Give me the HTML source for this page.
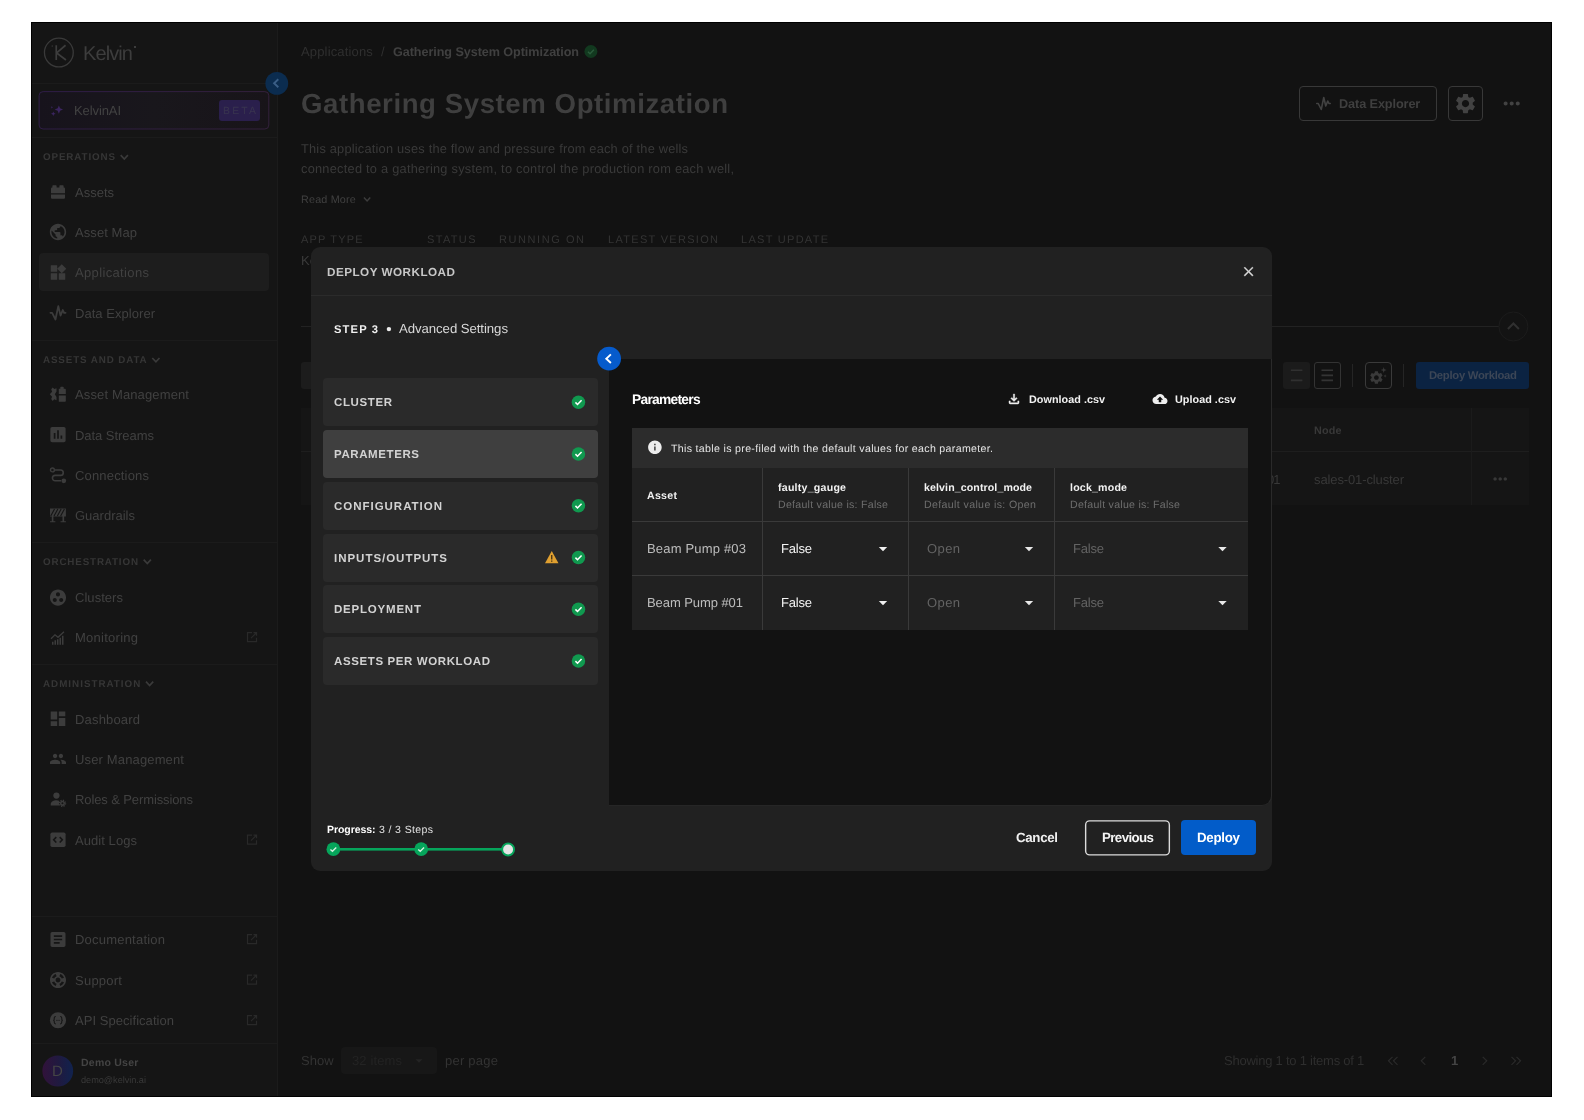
<!DOCTYPE html>
<html><head><meta charset="utf-8"><title>Kelvin - Deploy Workload</title>
<style>
html,body{margin:0;padding:0;background:#fff;}
body{width:1584px;height:1120px;position:relative;overflow:hidden;font-family:"Liberation Sans", sans-serif;}
body>div,body>span,body>svg{position:absolute;display:block;}
span{white-space:pre;will-change:transform;text-rendering:geometricPrecision;}
svg svg{overflow:visible;}
</style></head><body>
<div style="left:31px;top:22px;width:1521px;height:1075px;background:#121212;border:1px solid #000;box-sizing:border-box;"></div>
<div style="left:32px;top:23px;width:245px;height:1073px;background:#151515;"></div>
<div style="left:277px;top:23px;width:1px;height:1073px;background:#1b1b1b;"></div>
<svg style="left:43px;top:37px;" width="33" height="33" viewBox="0 0 33 33"><svg x="0.35" y="0.05" width="31" height="31" viewBox="0 0 31 31"><circle cx="15.5" cy="15.5" r="14.4" fill="none" stroke="#3a3a3a" stroke-width="1.3"/><path d="M12.900 8.200v14.700M22.200 8.200l-8.900 7.600 9.300 7.100" fill="none" stroke="#3d3d3d" stroke-width="1.700"/><rect x="8.300" y="8.400" width="1.200" height="1.200" fill="#3a3a3a"/></svg></svg>
<span style="left:82.60px;top:41.00px;font-size:20px;line-height:26px;color:#3d3d3d;letter-spacing:-0.897px;">Kelvin</span>
<div style="left:134px;top:46px;width:1.5px;height:1.5px;background:#3d3d3d;"></div>
<div style="left:32px;top:83px;width:245px;height:1px;background:#1b1b1b;"></div>
<svg style="left:38px;top:90px;" width="233" height="41" viewBox="0 0 233 41"><defs><linearGradient id="kg" x1="0" x2="1" y1="0" y2="0"><stop offset="0" stop-color="#17131c"/><stop offset=".5" stop-color="#19171c"/><stop offset="1" stop-color="#181419"/></linearGradient><linearGradient id="kb" x1="0" x2="1" y1="0" y2="0"><stop offset="0" stop-color="#2e1c46"/><stop offset="1" stop-color="#33203c"/></linearGradient></defs><rect x="1.100" y="1.600" width="229.700" height="37.400" rx="4" fill="url(#kg)" stroke="url(#kb)" stroke-width="1"/></svg>
<svg style="left:49px;top:104px;" width="16" height="13" viewBox="0 0 16 14"><path d="M10 1.500l1.300 3.200 3.200 1.300-3.200 1.300L10 10.500 8.700 7.300 5.500 6l3.200-1.300z M4 8l.7 1.800 1.800.7-1.800.7L4 13l-.7-1.800-1.800-.7 1.800-.7z M2.500 2l.4 1.100 1.100.4-1.100.4-.4 1.100-.4-1.100L1 3.500l1.100-.4z" fill="#3b2560"/></svg>
<span style="left:74.30px;top:102.00px;font-size:13px;line-height:17px;color:#424242;letter-spacing:-0.100px;">KelvinAI</span>
<div style="left:219px;top:100px;width:41px;height:21px;background:#2a1f4c;border-radius:3px;"></div>
<span style="left:223.00px;top:105.00px;font-size:10.4px;line-height:14px;color:#39344f;letter-spacing:2.208px;">BETA</span>
<div style="left:32px;top:137px;width:246px;height:1px;background:#1b1b1b;"></div>
<span style="left:42.50px;top:151.00px;font-size:9.8px;line-height:13px;color:#363636;font-weight:700;letter-spacing:0.882px;">OPERATIONS</span>
<svg style="left:118px;top:152px;" width="14" height="11" viewBox="0 0 14 11"><svg x="0.0" y="0.5" width="12.600000000000001" height="9.2" viewBox="0 0 12.600000000000001 9.2"><path d="M2.7 2.7L6.300000000000001 6.5L9.9 2.7" fill="none" stroke="#3a3a3a" stroke-width="1.7"/></svg></svg>
<svg style="left:51px;top:185px;" width="14" height="14" viewBox="0 0 14 14"><path d="M2 0.300h3a.6.600 0 0 1 .6.600V2.500h2.800V.9a.6.600 0 0 1 .6-.6h3a.6.600 0 0 1 .6.600V2.500h.4a1 1 0 0 1 1 1V8.300H0V3.500a1 1 0 0 1 1-1h.4V.9a.6.600 0 0 1 .6-.6zM0 9.500h14v3.200a1 1 0 0 1-1 1H1a1 1 0 0 1-1-1z" fill="#3c3c3c"/></svg>
<span style="left:75.00px;top:184.00px;font-size:13px;line-height:17px;color:#414141;letter-spacing:-0.003px;">Assets</span>
<svg style="left:48px;top:222px;" width="21" height="21" viewBox="0 0 21 21"><svg x="0.2" y="0.2" width="19.6" height="19.6" viewBox="0 0 24 24"><path d="M12 2C6.48 2 2 6.48 2 12s4.48 10 10 10 10-4.48 10-10S17.52 2 12 2zm-1 17.93c-3.95-.49-7-3.85-7-7.93 0-.62.08-1.21.21-1.79L9 15v1c0 1.1.9 2 2 2v1.93zm6.9-2.54c-.26-.81-1-1.39-1.9-1.39h-1v-3c0-.55-.45-1-1-1H8v-2h2c.55 0 1-.45 1-1V7h2c1.1 0 2-.9 2-2v-.41c2.93 1.19 5 4.06 5 7.41 0 2.08-.8 3.97-2.1 5.39z" fill="#3c3c3c"/></svg></svg>
<span style="left:75.00px;top:224.00px;font-size:13px;line-height:17px;color:#414141;letter-spacing:0.072px;">Asset Map</span>
<div style="left:39px;top:253px;width:230px;height:38px;background:#1d1d1d;border-radius:4px;"></div>
<svg style="left:48px;top:262px;" width="21" height="22" viewBox="0 0 21 22"><svg x="0.35" y="0.85" width="19.3" height="19.3" viewBox="0 0 24 24"><path d="M13 13v8h8v-8h-8zM3 21h8v-8H3v8zM3 3v8h8V3H3zm13.66-1.31L11 7.34 16.66 13l5.66-5.66-5.66-5.65z" fill="#3c3c3c"/></svg></svg>
<span style="left:75.00px;top:264.00px;font-size:13px;line-height:17px;color:#414141;letter-spacing:0.354px;">Applications</span>
<svg style="left:49px;top:303px;" width="19" height="20" viewBox="0 0 19 20"><svg x="0.04" y="0.84" width="17.92" height="17.92" viewBox="-1.250 -1.500 16 16"><path d="M0 6.500h1.500l3 6 2.500-12 2 8.500 2-5 1.200 2.500H13.500" fill="none" stroke="#3c3c3c" stroke-width="1.600" stroke-linejoin="round" stroke-linecap="round"/></svg></svg>
<span style="left:75.00px;top:305.00px;font-size:13px;line-height:17px;color:#414141;letter-spacing:0.043px;">Data Explorer</span>
<div style="left:32px;top:340px;width:246px;height:1px;background:#1b1b1b;"></div>
<span style="left:42.50px;top:354.00px;font-size:9.8px;line-height:13px;color:#363636;font-weight:700;letter-spacing:0.881px;">ASSETS AND DATA</span>
<svg style="left:149px;top:355px;" width="15" height="11" viewBox="0 0 15 11"><svg x="0.6" y="0.3" width="12.600000000000001" height="9.2" viewBox="0 0 12.600000000000001 9.2"><path d="M2.7 2.7L6.300000000000001 6.5L9.9 2.7" fill="none" stroke="#3a3a3a" stroke-width="1.7"/></svg></svg>
<svg style="left:49px;top:386px;" width="19" height="18" viewBox="0 0 19 18"><svg x="0.5" y="0.2" width="17" height="16" viewBox="0 0 17 16"><path d="M9.300 2.500h1.500V1.200a.7.700 0 0 1 .7-.7h2a.7.700 0 0 1 .7.700V2.500h1.300a.8.800 0 0 1 .8.800V7.800H9.300zM9.300 9.300h7v5.400a.8.800 0 0 1-.8.800H9.300zM3.200 1.200l1.600 1.700L7 2v3.300l-1.700 2.700L7 10.700V14l-2.200-.9-1.600 1.700-1.500-1.900.9-2.400L.3 8l2.300-2.500-.9-2.400z" fill="#3c3c3c"/></svg></svg>
<span style="left:75.00px;top:386.00px;font-size:13px;line-height:17px;color:#414141;letter-spacing:0.132px;">Asset Management</span>
<svg style="left:47px;top:424px;" width="23" height="22" viewBox="0 0 23 22"><svg x="0.85" y="0.45" width="20.3" height="20.3" viewBox="0 0 24 24"><path d="M19 3H5c-1.1 0-2 .9-2 2v14c0 1.1.9 2 2 2h14c1.1 0 2-.9 2-2V5c0-1.1-.9-2-2-2zM9 17H7v-7h2v7zm4 0h-2V7h2v10zm4 0h-2v-4h2v4z" fill="#3c3c3c"/></svg></svg>
<span style="left:75.00px;top:427.00px;font-size:13px;line-height:17px;color:#414141;letter-spacing:-0.044px;">Data Streams</span>
<svg style="left:49px;top:466px;" width="19" height="19" viewBox="0 0 19 19"><svg x="0.2" y="0.7" width="17.3" height="17.3" viewBox="0 0 16 16"><circle cx="3" cy="3" r="1.800" fill="none" stroke="#3c3c3c" stroke-width="1.300"/><circle cx="13.500" cy="13" r="2.200" fill="#3c3c3c"/><path d="M5 3h5.500a2.500 2.500 0 0 1 0 5h-5a2.500 2.500 0 0 0 0 5H11" fill="none" stroke="#3c3c3c" stroke-width="1.500"/></svg></svg>
<span style="left:75.00px;top:467.00px;font-size:13px;line-height:17px;color:#414141;letter-spacing:0.172px;">Connections</span>
<svg style="left:49px;top:507px;" width="19" height="17" viewBox="0 0 19 17"><svg x="0.7" y="0.9" width="16.5" height="14.5" viewBox="0 0 16 14"><path d="M0.300 0.500h15.400v7.800H0.300z M2 8.300h1.600v4.500H5.500v1.200H0.300v-1.200H2z M12.400 8.300H14v4.500h1.700v1.200H10.500v-1.200h1.900z" fill="#3c3c3c"/><path d="M1 7.800l3.700-6.800M4.200 7.800l3.700-6.800M7.400 7.800l3.700-6.800M10.600 7.800l3.700-6.800" stroke="#151515" stroke-width="1.100"/></svg></svg>
<span style="left:75.00px;top:507.00px;font-size:13px;line-height:17px;color:#414141;letter-spacing:0.003px;">Guardrails</span>
<div style="left:32px;top:542px;width:246px;height:1px;background:#1b1b1b;"></div>
<span style="left:42.50px;top:556.00px;font-size:9.8px;line-height:13px;color:#363636;font-weight:700;letter-spacing:0.855px;">ORCHESTRATION</span>
<svg style="left:141px;top:557px;" width="12.600000000000001" height="9.2" viewBox="0 0 12.600000000000001 9.2"><path d="M2.7 2.7L6.300000000000001 6.5L9.9 2.7" fill="none" stroke="#3a3a3a" stroke-width="1.7"/></svg>
<svg style="left:48px;top:587px;" width="21" height="22" viewBox="0 0 21 22"><svg x="0.35" y="0.95" width="19.3" height="19.3" viewBox="0 0 24 24"><path d="M12 2C6.48 2 2 6.48 2 12s4.480 10 10 10 10-4.480 10-10S17.520 2 12 2zM8 17.500c-1.380 0-2.500-1.120-2.500-2.500s1.120-2.500 2.500-2.500 2.500 1.120 2.500 2.500-1.120 2.500-2.500 2.500zM9.500 8c0-1.380 1.120-2.500 2.500-2.500s2.500 1.120 2.500 2.500-1.120 2.500-2.500 2.500S9.500 9.380 9.500 8zm6.500 9.500c-1.380 0-2.500-1.120-2.500-2.500s1.120-2.500 2.500-2.500 2.500 1.120 2.500 2.500-1.120 2.500-2.500 2.500z" fill="#3c3c3c"/></svg></svg>
<span style="left:75.00px;top:589.00px;font-size:13px;line-height:17px;color:#414141;letter-spacing:0.045px;">Clusters</span>
<svg style="left:50px;top:629px;" width="17" height="18" viewBox="0 0 17 18"><svg x="0" y="0.8" width="16" height="16" viewBox="0 0 16 16"><path d="M1 9l4-4 3 2.500 6-5.500" fill="none" stroke="#3c3c3c" stroke-width="1.300"/><path d="M2 12h1.500v3H2zM4.500 10.500H6V15H4.500zM7 9.500h1.500V15H7zM9.500 8H11v7H9.500zM12 6h1.500v9H12z" fill="#3c3c3c"/></svg></svg>
<span style="left:75.00px;top:629.00px;font-size:13px;line-height:17px;color:#414141;letter-spacing:0.255px;">Monitoring</span>
<svg style="left:246px;top:631px;" width="13" height="14" viewBox="0 0 13 14"><svg x="0" y="0.2" width="12" height="12" viewBox="0 0 12 12"><path d="M6 1.500H1.500V10.500H10.500V6.500M5 7L10.500 1.500M7.500 1.500H10.500V4.500" fill="none" stroke="#292929" stroke-width="1.200"/></svg></svg>
<div style="left:32px;top:664px;width:246px;height:1px;background:#1b1b1b;"></div>
<span style="left:42.50px;top:678.00px;font-size:9.8px;line-height:13px;color:#363636;font-weight:700;letter-spacing:1.009px;">ADMINISTRATION</span>
<svg style="left:143px;top:679px;" width="14" height="11" viewBox="0 0 14 11"><svg x="0.3" y="0.0" width="12.600000000000001" height="9.2" viewBox="0 0 12.600000000000001 9.2"><path d="M2.7 2.7L6.300000000000001 6.5L9.9 2.7" fill="none" stroke="#3a3a3a" stroke-width="1.7"/></svg></svg>
<svg style="left:48px;top:708px;" width="21" height="22" viewBox="0 0 21 22"><svg x="0.25" y="0.95" width="19.5" height="19.5" viewBox="0 0 24 24"><path d="M3 13h8V3H3v10zm0 8h8v-6H3v6zm10 0h8V11h-8v10zm0-18v6h8V3h-8z" fill="#3c3c3c"/></svg></svg>
<span style="left:75.00px;top:711.00px;font-size:13px;line-height:17px;color:#414141;letter-spacing:0.174px;">Dashboard</span>
<svg style="left:49px;top:750px;" width="19" height="19" viewBox="0 0 19 19"><svg x="0.25" y="0.15" width="17.5" height="17.5" viewBox="0 0 24 24"><path d="M16 11c1.66 0 2.99-1.34 2.99-3S17.66 5 16 5c-1.66 0-3 1.34-3 3s1.34 3 3 3zm-8 0c1.66 0 2.99-1.34 2.99-3S9.66 5 8 5C6.34 5 5 6.34 5 8s1.34 3 3 3zm0 2c-2.33 0-7 1.17-7 3.5V19h14v-2.5c0-2.33-4.67-3.5-7-3.5zm8 0c-.29 0-.62.02-.97.05 1.16.84 1.97 1.97 1.97 3.45V19h6v-2.5c0-2.33-4.67-3.5-7-3.5z" fill="#3c3c3c"/></svg></svg>
<span style="left:75.00px;top:751.00px;font-size:13px;line-height:17px;color:#414141;letter-spacing:0.146px;">User Management</span>
<svg style="left:49px;top:790px;" width="19" height="19" viewBox="0 0 19 19"><svg x="0.7" y="0.9" width="16.6" height="16.6" viewBox="0 0 16 16"><circle cx="6.500" cy="4.500" r="3" fill="#3c3c3c"/><path d="M1 14v-1.500c0-2 3-3.500 5.500-3.500.8 0 1.700.2 2.500.4V14z" fill="#3c3c3c"/><circle cx="12.300" cy="12" r="1.700" fill="none" stroke="#3c3c3c" stroke-width="1.500"/><circle cx="12.300" cy="12" r="3" fill="none" stroke="#3c3c3c" stroke-width="1.300" stroke-dasharray="1.200 1.160"/></svg></svg>
<span style="left:75.00px;top:791.00px;font-size:13px;line-height:17px;color:#414141;letter-spacing:-0.108px;">Roles &amp; Permissions</span>
<svg style="left:50px;top:832px;" width="17" height="17" viewBox="0 0 17 17"><svg x="0" y="0.3" width="16" height="15" viewBox="0 0 16 15"><rect x=".4" y=".3" width="15.200" height="14.400" rx="1.700" fill="#3c3c3c"/><path d="M6.300 4.800L3.700 7.500l2.600 2.700M9.700 4.800l2.600 2.700-2.600 2.700" fill="none" stroke="#151515" stroke-width="1.600"/></svg></svg>
<span style="left:75.00px;top:832.00px;font-size:13px;line-height:17px;color:#414141;letter-spacing:0.062px;">Audit Logs</span>
<svg style="left:246px;top:833px;" width="13" height="14" viewBox="0 0 13 14"><svg x="0" y="0.7" width="12" height="12" viewBox="0 0 12 12"><path d="M6 1.500H1.500V10.500H10.500V6.500M5 7L10.500 1.500M7.500 1.500H10.500V4.500" fill="none" stroke="#292929" stroke-width="1.200"/></svg></svg>
<div style="left:32px;top:916px;width:245px;height:1px;background:#1b1b1b;"></div>
<svg style="left:48px;top:929px;" width="21" height="22" viewBox="0 0 21 22"><svg x="0.0" y="0.5" width="20" height="20" viewBox="0 0 24 24"><path d="M19 3H5c-1.1 0-2 .9-2 2v14c0 1.1.9 2 2 2h14c1.1 0 2-.9 2-2V5c0-1.1-.9-2-2-2zm-5 14H7v-2h7v2zm3-4H7v-2h10v2zm0-4H7V7h10v2z" fill="#3c3c3c"/></svg></svg>
<span style="left:75.00px;top:931.00px;font-size:13px;line-height:17px;color:#414141;letter-spacing:0.212px;">Documentation</span>
<svg style="left:246px;top:933px;" width="13" height="14" viewBox="0 0 13 14"><svg x="0" y="0.2" width="12" height="12" viewBox="0 0 12 12"><path d="M6 1.500H1.500V10.500H10.500V6.500M5 7L10.500 1.500M7.500 1.500H10.500V4.500" fill="none" stroke="#292929" stroke-width="1.200"/></svg></svg>
<svg style="left:48px;top:970px;" width="21" height="21" viewBox="0 0 21 21"><svg x="0.35" y="0.35" width="19.3" height="19.3" viewBox="0 0 24 24"><path d="M12,2C6.48,2,2,6.48,2,12c0,5.52,4.48,10,10,10s10-4.48,10-10C22,6.48,17.52,2,12,2z M19.46,9.12l-2.78,1.15 c-0.51-1.36-1.58-2.44-2.95-2.94l1.15-2.78C16.98,5.35,18.65,7.02,19.46,9.12z M12,15c-1.66,0-3-1.34-3-3s1.34-3,3-3s3,1.34,3,3 S13.66,15,12,15z M9.13,4.54l1.17,2.78c-1.38,0.5-2.47,1.59-2.98,2.97L4.54,9.13C5.35,7.02,7.02,5.35,9.13,4.54z M4.54,14.87 l2.78-1.15c0.51,1.38,1.59,2.46,2.97,2.96l-1.170,2.78C7.02,18.65,5.35,16.98,4.54,14.87z M14.88,19.46l-1.15-2.78 c1.37-0.51,2.45-1.59,2.95-2.97l2.78,1.170C18.65,16.98,16.98,18.65,14.880,19.460z" fill="#3c3c3c"/></svg></svg>
<span style="left:75.00px;top:972.00px;font-size:13px;line-height:17px;color:#414141;letter-spacing:0.242px;">Support</span>
<svg style="left:246px;top:973px;" width="13" height="14" viewBox="0 0 13 14"><svg x="0" y="0.7" width="12" height="12" viewBox="0 0 12 12"><path d="M6 1.500H1.500V10.500H10.500V6.500M5 7L10.500 1.500M7.500 1.500H10.500V4.500" fill="none" stroke="#292929" stroke-width="1.200"/></svg></svg>
<svg style="left:49px;top:1011px;" width="19" height="19" viewBox="0 0 19 19"><svg x="0.4" y="0.6" width="17.2" height="17.2" viewBox="0 0 16 16"><circle cx="8" cy="8" r="7.500" fill="#3c3c3c"/><path d="M6 4.500c-1 0-1.500.5-1.500 1.500v1c0 .5-.5 1-1 1 .5 0 1 .5 1 1v1c0 1 .5 1.500 1.500 1.500M10 4.500c1 0 1.500.5 1.500 1.500v1c0 .5.500 1 1 1-.5 0-1 .5-1 1v1c0 1-.5 1.500-1.500 1.500" fill="none" stroke="#151515" stroke-width="1"/><circle cx="6.800" cy="8" r=".5" fill="#151515"/><circle cx="8" cy="8" r=".5" fill="#151515"/><circle cx="9.200" cy="8" r=".5" fill="#151515"/></svg></svg>
<span style="left:75.00px;top:1012.00px;font-size:13px;line-height:17px;color:#414141;letter-spacing:0.045px;">API Specification</span>
<svg style="left:246px;top:1014px;" width="13" height="14" viewBox="0 0 13 14"><svg x="0" y="0.2" width="12" height="12" viewBox="0 0 12 12"><path d="M6 1.500H1.500V10.500H10.500V6.500M5 7L10.500 1.500M7.500 1.500H10.500V4.500" fill="none" stroke="#292929" stroke-width="1.200"/></svg></svg>
<div style="left:32px;top:1043px;width:246px;height:1px;background:#1b1b1b;"></div>
<svg style="left:42px;top:1055px;" width="32" height="32" viewBox="0 0 32 32"><defs><linearGradient id="av" x1="0" x2="1" y1="0" y2="0"><stop offset="0" stop-color="#31123a"/><stop offset=".55" stop-color="#1f1a40"/><stop offset="1" stop-color="#10224e"/></linearGradient></defs><circle cx="15.750" cy="16" r="15.400" fill="url(#av)"/></svg>
<span style="left:52.48px;top:1062.00px;font-size:15px;line-height:20px;color:#454545;">D</span>
<span style="left:81.30px;top:1056.00px;font-size:10.5px;line-height:14px;color:#444;font-weight:700;letter-spacing:0.231px;">Demo User</span>
<span style="left:81.30px;top:1074.00px;font-size:9.2px;line-height:12px;color:#3a3a3a;letter-spacing:-0.040px;">demo@kelvin.ai</span>
<svg style="left:264px;top:71px;" width="27" height="26" viewBox="0 0 27 26"><svg x="0.4" y="0.0" width="24.8" height="24.8" viewBox="0 0 24.8 24.8"><circle cx="12.4" cy="12.4" r="11.4" fill="#0b2c4f"/></svg></svg>
<svg style="left:271px;top:76px;" width="12" height="16" viewBox="0 0 12 16"><svg x="0.2" y="0.4" width="10.0" height="13.8" viewBox="0 0 10.0 13.8"><path d="M7.1 2.9L2.9 6.9L7.1 10.9" fill="none" stroke="#3a5e86" stroke-width="1.9"/></svg></svg>
<span style="left:301.00px;top:43.00px;font-size:13px;line-height:17px;color:#2f2f2f;letter-spacing:0.154px;">Applications</span>
<span style="left:380.80px;top:43.00px;font-size:13px;line-height:17px;color:#2f2f2f;">/</span>
<span style="left:393.00px;top:44.00px;font-size:12.6px;line-height:16px;color:#404040;font-weight:700;letter-spacing:-0.055px;">Gathering System Optimization</span>
<svg style="left:584px;top:45px;" width="15" height="14" viewBox="0 0 15 14"><svg x="0.4" y="0" width="13" height="13" viewBox="0 0 12 12"><circle cx="6" cy="6" r="6" fill="#12391f"/><path d="M3.300 6.200l1.900 1.900 3.500-3.700" fill="none" stroke="#2b5c3c" stroke-width="1.300"/></svg></svg>
<span style="left:301.00px;top:86.00px;font-size:27.6px;line-height:36px;color:#3f3f3f;font-weight:700;letter-spacing:0.575px;">Gathering System Optimization</span>
<span style="left:301.00px;top:140.00px;font-size:12.8px;line-height:17px;color:#3a3a3a;letter-spacing:0.209px;">This application uses the flow and pressure from each of the wells</span>
<span style="left:301.00px;top:160.00px;font-size:12.8px;line-height:17px;color:#3a3a3a;letter-spacing:0.244px;">connected to a gathering system, to control the production rom each well,</span>
<span style="left:301.00px;top:193.00px;font-size:10.8px;line-height:14px;color:#404040;letter-spacing:0.172px;">Read More</span>
<svg style="left:361px;top:195px;" width="13" height="10" viewBox="0 0 13 10"><svg x="0.45" y="0.1" width="11.3" height="8.4" viewBox="0 0 11.3 8.4"><path d="M2.5 2.5L5.65 5.9L8.8 2.5" fill="none" stroke="#3c3c3c" stroke-width="1.5"/></svg></svg>
<span style="left:301.00px;top:233.00px;font-size:11px;line-height:14px;color:#343434;letter-spacing:1.171px;">APP TYPE</span>
<span style="left:427.00px;top:233.00px;font-size:11px;line-height:14px;color:#343434;letter-spacing:1.347px;">STATUS</span>
<span style="left:499.00px;top:233.00px;font-size:11px;line-height:14px;color:#343434;letter-spacing:1.568px;">RUNNING ON</span>
<span style="left:608.00px;top:233.00px;font-size:11px;line-height:14px;color:#343434;letter-spacing:1.298px;">LATEST VERSION</span>
<span style="left:741.00px;top:233.00px;font-size:11px;line-height:14px;color:#343434;letter-spacing:1.283px;">LAST UPDATE</span>
<span style="left:301.00px;top:252.00px;font-size:13px;line-height:17px;color:#3a3a3a;">Ke</span>
<div style="left:1299px;top:86px;width:138px;height:35px;border:1px solid #383838;border-radius:4px;box-sizing:border-box;"></div>
<svg style="left:1315px;top:95px;" width="18" height="18" viewBox="0 0 18 18"><svg x="0.5" y="0.5" width="16" height="16" viewBox="-1.250 -1.500 16 16"><path d="M0 6.500h1.500l3 6 2.500-12 2 8.500 2-5 1.200 2.500H13.500" fill="none" stroke="#424242" stroke-width="1.600" stroke-linejoin="round" stroke-linecap="round"/></svg></svg>
<span style="left:1339.20px;top:96.00px;font-size:12.7px;line-height:17px;color:#3f3f3f;font-weight:700;letter-spacing:-0.100px;">Data Explorer</span>
<div style="left:1448px;top:86px;width:35px;height:35px;border:1px solid #383838;border-radius:4px;box-sizing:border-box;"></div>
<svg style="left:1453px;top:91px;" width="26" height="26" viewBox="0 0 26 26"><svg x="0.4" y="0.5" width="24.2" height="24.2" viewBox="0 0 24 24"><path d="M19.14,12.94c0.04-0.3,0.06-0.61,0.06-0.94c0-0.32-0.02-0.64-0.07-0.94l2.03-1.58c0.18-0.14,0.23-0.41,0.12-0.61 l-1.92-3.32c-0.12-0.22-0.37-0.29-0.59-0.22l-2.39,0.96c-0.5-0.38-1.03-0.7-1.62-0.94L14.4,2.81c-0.04-0.24-0.24-0.41-0.48-0.41 h-3.84c-0.24,0-0.43,0.17-0.47,0.41L9.25,5.35C8.66,5.59,8.12,5.92,7.63,6.29L5.24,5.33c-0.22-0.08-0.47,0-0.59,0.22L2.74,8.87 C2.62,9.08,2.66,9.34,2.86,9.48l2.03,1.58C4.84,11.36,4.8,11.69,4.8,12s0.02,0.64,0.07,0.94l-2.03,1.58 c-0.18,0.14-0.23,0.41-0.12,0.61l1.92,3.32c0.12,0.22,0.37,0.29,0.59,0.22l2.39-0.96c0.5,0.38,1.03,0.7,1.62,0.94l0.36,2.54 c0.05,0.24,0.24,0.41,0.48,0.41h3.84c0.24,0,0.44-0.17,0.47-0.41l0.36-2.54c0.59-0.24,1.13-0.56,1.62-0.94l2.39,0.96 c0.22,0.08,0.47,0,0.59-0.22l1.92-3.32c0.12-0.22,0.07-0.47-0.12-0.61L19.14,12.94z M12,15.6c-1.98,0-3.6-1.62-3.6-3.6 s1.62-3.6,3.6-3.6s3.6,1.62,3.6,3.6S13.98,15.6,12,15.6z" fill="#424242"/></svg></svg>
<svg style="left:1499px;top:91px;" width="26" height="26" viewBox="0 0 26 26"><svg x="0.55" y="0.35" width="24.3" height="24.3" viewBox="0 0 24 24"><path d="M6 10c-1.1 0-2 .9-2 2s.9 2 2 2 2-.9 2-2-.9-2-2-2zm12 0c-1.1 0-2 .9-2 2s.9 2 2 2 2-.9 2-2-.9-2-2-2zm-6 0c-1.1 0-2 .9-2 2s.9 2 2 2 2-.9 2-2-.9-2-2-2z" fill="#424242"/></svg></svg>
<div style="left:301px;top:326px;width:1200px;height:1px;background:#222;"></div>
<svg style="left:1497px;top:310px;" width="34" height="34" viewBox="0 0 34 34"><svg x="0.4" y="0.5" width="32" height="32" viewBox="0 0 32 32"><circle cx="16" cy="16" r="14.5" fill="#131313" stroke="#1c1c1c" stroke-width="1"/></svg></svg>
<svg style="left:1504px;top:320px;" width="19" height="13" viewBox="0 0 19 13"><svg x="0.9" y="0.45" width="17" height="11.5" viewBox="0 0 17 11.5"><path d="M3 8.5L8.5 3L14 8.5" fill="none" stroke="#303030" stroke-width="2"/></svg></svg>
<div style="left:301px;top:361.5px;width:20px;height:27px;background:#1c1c1c;border-radius:3px;"></div>
<div style="left:1283px;top:361.5px;width:27px;height:27px;background:#1b1b1b;border-radius:3px;"></div>
<svg style="left:1290px;top:366px;" width="14" height="18" viewBox="0 0 14 18"><path d="M0.900 4.200h11.500M0.900 14.400h11.500" stroke="#303030" stroke-width="1.600"/></svg>
<div style="left:1314px;top:361.5px;width:27px;height:27px;border:1px solid #333;border-radius:3px;box-sizing:border-box;"></div>
<svg style="left:1321px;top:366px;" width="14" height="18" viewBox="0 0 14 18"><path d="M0.500 4.200h11.500M0.500 9.400h11.500M0.500 14.400h11.500" stroke="#343434" stroke-width="1.600"/></svg>
<div style="left:1352px;top:364px;width:1px;height:23px;background:#252525;"></div>
<div style="left:1365px;top:361.5px;width:27px;height:27px;border:1px solid #3a3a3a;border-radius:4px;box-sizing:border-box;"></div>
<svg style="left:1368px;top:369px;" width="18" height="18" viewBox="0 0 18 18"><svg x="0.5" y="0.6" width="15.8" height="15.8" viewBox="0 0 24 24"><path d="M19.14,12.94c0.04-0.3,0.06-0.61,0.06-0.94c0-0.32-0.02-0.64-0.07-0.94l2.03-1.58c0.18-0.14,0.23-0.41,0.12-0.61 l-1.92-3.32c-0.12-0.22-0.37-0.29-0.59-0.22l-2.39,0.96c-0.5-0.38-1.03-0.7-1.62-0.94L14.4,2.81c-0.04-0.24-0.24-0.41-0.48-0.41 h-3.84c-0.24,0-0.43,0.17-0.47,0.41L9.25,5.35C8.66,5.59,8.12,5.92,7.63,6.29L5.24,5.33c-0.22-0.08-0.47,0-0.59,0.22L2.74,8.87 C2.62,9.08,2.66,9.34,2.86,9.48l2.03,1.58C4.84,11.36,4.8,11.69,4.8,12s0.02,0.64,0.07,0.94l-2.03,1.58 c-0.18,0.14-0.23,0.41-0.12,0.61l1.92,3.32c0.12,0.22,0.37,0.29,0.59,0.22l2.39-0.96c0.5,0.38,1.03,0.7,1.62,0.94l0.36,2.54 c0.05,0.24,0.24,0.41,0.48,0.41h3.84c0.24,0,0.44-0.17,0.47-0.41l0.36-2.54c0.59-0.24,1.13-0.56,1.62-0.94l2.39,0.96 c0.22,0.08,0.47,0,0.59-0.22l1.92-3.32c0.12-0.22,0.07-0.47-0.12-0.61L19.14,12.94z M12,15.6c-1.98,0-3.6-1.62-3.6-3.6 s1.62-3.6,3.6-3.6s3.6,1.62,3.6,3.6S13.98,15.6,12,15.6z" fill="#3a3a3a"/></svg></svg>
<svg style="left:1380px;top:367px;" width="8" height="7" viewBox="0 0 8 7"><svg x="0.7" y="0" width="6" height="6" viewBox="0 0 7 7"><path d="M3.500 0l.8 2.700 2.700.8-2.700.8-.8 2.700-.8-2.700L0 3.500l2.700-.8z" fill="#3a3a3a"/></svg></svg>
<svg style="left:1383px;top:374px;" width="5" height="5" viewBox="0 0 5 5"><svg x="0.4" y="0.3" width="3.4" height="3.4" viewBox="0 0 7 7"><path d="M3.500 0l.8 2.700 2.700.8-2.700.8-.8 2.700-.8-2.700L0 3.500l2.700-.8z" fill="#383838"/></svg></svg>
<div style="left:1403px;top:364px;width:1px;height:23px;background:#252525;"></div>
<div style="left:1416px;top:361.5px;width:113px;height:27px;background:#0b2342;border-radius:3px;"></div>
<span style="left:1428.50px;top:369.00px;font-size:11.3px;line-height:15px;color:#3c4656;font-weight:700;letter-spacing:-0.291px;">Deploy Workload</span>
<div style="left:301px;top:408px;width:1228px;height:97px;background:#151515;"></div>
<div style="left:301px;top:451px;width:1228px;height:1px;background:#1e1e1e;"></div>
<div style="left:1471px;top:408px;width:1px;height:97px;background:#1b1b1b;"></div>
<span style="left:1314.00px;top:424.00px;font-size:10.8px;line-height:14px;color:#383838;font-weight:700;letter-spacing:0.167px;">Node</span>
<span style="left:1314.00px;top:471.00px;font-size:13px;line-height:17px;color:#383838;letter-spacing:-0.118px;">sales-01-cluster</span>
<span style="left:1267.20px;top:471.00px;font-size:13px;line-height:17px;color:#383838;letter-spacing:-0.969px;">01</span>
<svg style="left:1490px;top:468px;" width="22" height="23" viewBox="0 0 22 23"><svg x="0.0" y="0.7" width="20.4" height="20.4" viewBox="0 0 24 24"><path d="M6 10c-1.1 0-2 .9-2 2s.9 2 2 2 2-.9 2-2-.9-2-2-2zm12 0c-1.1 0-2 .9-2 2s.9 2 2 2 2-.9 2-2-.9-2-2-2zm-6 0c-1.1 0-2 .9-2 2s.9 2 2 2 2-.9 2-2-.9-2-2-2z" fill="#383838"/></svg></svg>
<span style="left:301.00px;top:1052.00px;font-size:13px;line-height:17px;color:#333;letter-spacing:0.023px;">Show</span>
<div style="left:341px;top:1047px;width:96px;height:27px;background:#171717;border-radius:4px;"></div>
<span style="left:352.30px;top:1052.00px;font-size:13px;line-height:17px;color:#232323;letter-spacing:0.123px;">32 items</span>
<svg style="left:410px;top:1052px;" width="19" height="19" viewBox="0 0 19 19"><svg x="0.5" y="0.2" width="17" height="17" viewBox="0 0 24 24"><path d="M7 10l5 5 5-5z" fill="#242424"/></svg></svg>
<span style="left:445.00px;top:1052.00px;font-size:13px;line-height:17px;color:#333;letter-spacing:0.239px;">per page</span>
<span style="left:1223.70px;top:1052.00px;font-size:13px;line-height:17px;color:#2e2e2e;letter-spacing:-0.237px;">Showing 1 to 1 items of 1</span>
<svg style="left:1387px;top:1055px;" width="13" height="12" viewBox="0 0 13 12"><svg x="0" y="0.8" width="12" height="10" viewBox="0 0 12 10"><path d="M5.500 1L1.500 5l4 4M10.500 1L6.500 5l4 4" fill="none" stroke="#2a2a2a" stroke-width="1.200"/></svg></svg>
<svg style="left:1420px;top:1055px;" width="8" height="12" viewBox="0 0 8 12"><svg x="0.3" y="0.8" width="6" height="10" viewBox="0 0 6 10"><path d="M5 1L1 5l4 4" fill="none" stroke="#2a2a2a" stroke-width="1.200"/></svg></svg>
<span style="left:1450.68px;top:1052.00px;font-size:13px;line-height:17px;color:#444;font-weight:700;">1</span>
<svg style="left:1481px;top:1055px;" width="8" height="12" viewBox="0 0 8 12"><svg x="0.7" y="0.8" width="6" height="10" viewBox="0 0 6 10"><path d="M1 1l4 4-4 4" fill="none" stroke="#2a2a2a" stroke-width="1.200"/></svg></svg>
<svg style="left:1510px;top:1055px;" width="13" height="12" viewBox="0 0 13 12"><svg x="0" y="0.8" width="12" height="10" viewBox="0 0 12 10"><path d="M1.500 1l4 4-4 4M6.500 1l4 4-4 4" fill="none" stroke="#2a2a2a" stroke-width="1.200"/></svg></svg>
<div style="left:311px;top:247px;width:961px;height:624px;background:#212121;border-radius:9px;"></div>
<span style="left:327.00px;top:265.00px;font-size:11.7px;line-height:15px;color:#c8c8c8;font-weight:700;letter-spacing:0.484px;">DEPLOY WORKLOAD</span>
<svg style="left:1240px;top:263px;" width="18" height="18" viewBox="0 0 18 18"><svg x="0.6" y="0.6" width="16" height="16" viewBox="0 0 24 24"><path d="M19 6.41L17.59 5 12 10.59 6.41 5 5 6.41 10.59 12 5 17.59 6.41 19 12 13.41 17.59 19 19 17.59 13.41 12z" fill="#d8d8d8" stroke="#d8d8d8" stroke-width="0.4"/></svg></svg>
<div style="left:311px;top:295px;width:961px;height:1px;background:#2b2b2b;"></div>
<span style="left:334.00px;top:323.00px;font-size:11.2px;line-height:15px;color:#f0f0f0;font-weight:700;letter-spacing:1.128px;">STEP 3</span>
<svg style="left:385px;top:325px;" width="9" height="9" viewBox="0 0 9 9"><svg x="0.7" y="0.9" width="6.4" height="6.4" viewBox="0 0 6.4 6.4"><circle cx="3.2" cy="3.2" r="2.2" fill="#ececec"/></svg></svg>
<span style="left:399.00px;top:320.00px;font-size:13.2px;line-height:17px;color:#d8d8d8;letter-spacing:-0.062px;">Advanced Settings</span>
<div style="left:609px;top:359px;width:663px;height:447px;background:#121212;border-bottom-right-radius:10px;border-right:1px solid #2a2a2a;border-bottom:1px solid #262626;box-sizing:border-box;"></div>
<svg style="left:596px;top:345px;" width="27" height="28" viewBox="0 0 27 28"><svg x="0.2" y="0.8" width="25.8" height="25.8" viewBox="0 0 25.8 25.8"><circle cx="12.9" cy="12.9" r="11.9" fill="#065bcc"/></svg></svg>
<svg style="left:603px;top:351px;" width="12" height="16" viewBox="0 0 12 16"><svg x="0.4" y="0.5" width="10.399999999999999" height="14.399999999999999" viewBox="0 0 10.399999999999999 14.399999999999999"><path d="M7.5 2.9L2.9 7.199999999999999L7.5 11.5" fill="none" stroke="#fff" stroke-width="1.9"/></svg></svg>
<div style="left:323px;top:378px;width:275px;height:48px;background:#2a2a2a;border-radius:4px;"></div>
<span style="left:333.90px;top:396.00px;font-size:11.5px;line-height:15px;color:#d2d2d2;font-weight:700;letter-spacing:0.615px;">CLUSTER</span>
<svg style="left:571px;top:395px;" width="16" height="15" viewBox="0 0 16 15"><svg x="0.7" y="0.4" width="13.5" height="13.5" viewBox="0 0 13 13"><circle cx="6.500" cy="6.500" r="6.500" fill="#10994f"/><path d="M3.600 6.700l2 2 3.900-4" fill="none" stroke="#fff" stroke-width="1.500"/></svg></svg>
<div style="left:323px;top:430px;width:275px;height:48px;background:#3f3f3f;border-radius:4px;"></div>
<span style="left:333.90px;top:448.00px;font-size:11.5px;line-height:15px;color:#d2d2d2;font-weight:700;letter-spacing:0.594px;">PARAMETERS</span>
<svg style="left:571px;top:447px;" width="16" height="15" viewBox="0 0 16 15"><svg x="0.7" y="0.15" width="13.5" height="13.5" viewBox="0 0 13 13"><circle cx="6.500" cy="6.500" r="6.500" fill="#10994f"/><path d="M3.600 6.700l2 2 3.900-4" fill="none" stroke="#fff" stroke-width="1.500"/></svg></svg>
<div style="left:323px;top:482px;width:275px;height:48px;background:#2a2a2a;border-radius:4px;"></div>
<span style="left:333.90px;top:500.00px;font-size:11.5px;line-height:15px;color:#d2d2d2;font-weight:700;letter-spacing:0.978px;">CONFIGURATION</span>
<svg style="left:571px;top:498px;" width="16" height="16" viewBox="0 0 16 16"><svg x="0.7" y="0.9" width="13.5" height="13.5" viewBox="0 0 13 13"><circle cx="6.500" cy="6.500" r="6.500" fill="#10994f"/><path d="M3.600 6.700l2 2 3.900-4" fill="none" stroke="#fff" stroke-width="1.500"/></svg></svg>
<div style="left:323px;top:534px;width:275px;height:48px;background:#2a2a2a;border-radius:4px;"></div>
<span style="left:333.90px;top:552.00px;font-size:11.5px;line-height:15px;color:#d2d2d2;font-weight:700;letter-spacing:0.976px;">INPUTS/OUTPUTS</span>
<svg style="left:571px;top:550px;" width="16" height="16" viewBox="0 0 16 16"><svg x="0.7" y="0.65" width="13.5" height="13.5" viewBox="0 0 13 13"><circle cx="6.500" cy="6.500" r="6.500" fill="#10994f"/><path d="M3.600 6.700l2 2 3.900-4" fill="none" stroke="#fff" stroke-width="1.500"/></svg></svg>
<svg style="left:544px;top:550px;" width="16" height="15" viewBox="0 0 16 15"><svg x="0.5" y="0.35" width="14.5" height="13.5" viewBox="0 0 14 13"><path d="M7 .5L13.500 12.500H.5z" fill="#e0a030"/><path d="M6.400 4.500h1.200v4.200H6.400zM6.400 9.700h1.200v1.300H6.400z" fill="#3a2a10"/></svg></svg>
<div style="left:323px;top:585px;width:275px;height:48px;background:#2a2a2a;border-radius:4px;"></div>
<span style="left:333.90px;top:603.00px;font-size:11.5px;line-height:15px;color:#d2d2d2;font-weight:700;letter-spacing:0.792px;">DEPLOYMENT</span>
<svg style="left:571px;top:602px;" width="16" height="15" viewBox="0 0 16 15"><svg x="0.7" y="0.4" width="13.5" height="13.5" viewBox="0 0 13 13"><circle cx="6.500" cy="6.500" r="6.500" fill="#10994f"/><path d="M3.600 6.700l2 2 3.900-4" fill="none" stroke="#fff" stroke-width="1.500"/></svg></svg>
<div style="left:323px;top:637px;width:275px;height:48px;background:#2a2a2a;border-radius:4px;"></div>
<span style="left:333.90px;top:655.00px;font-size:11.5px;line-height:15px;color:#d2d2d2;font-weight:700;letter-spacing:0.609px;">ASSETS PER WORKLOAD</span>
<svg style="left:571px;top:654px;" width="16" height="15" viewBox="0 0 16 15"><svg x="0.7" y="0.15" width="13.5" height="13.5" viewBox="0 0 13 13"><circle cx="6.500" cy="6.500" r="6.500" fill="#10994f"/><path d="M3.600 6.700l2 2 3.900-4" fill="none" stroke="#fff" stroke-width="1.500"/></svg></svg>
<span style="left:327.00px;top:823.00px;font-size:10.5px;line-height:14px;color:#fff;font-weight:700;letter-spacing:-0.066px;">Progress:</span>
<span style="left:378.70px;top:823.00px;font-size:10.5px;line-height:14px;color:#e0e0e0;letter-spacing:0.380px;">3 / 3 Steps</span>
<svg style="left:333px;top:846px;" width="176" height="6" viewBox="0 0 176 6"><rect x="0" y="2" width="175" height="2.600" fill="#06a55b"/></svg>
<svg style="left:326px;top:842px;" width="16" height="16" viewBox="0 0 16 16"><svg x="0.5" y="0.3" width="13.8" height="13.8" viewBox="0 0 13 13"><circle cx="6.500" cy="6.500" r="6.500" fill="#06a55b"/><path d="M3.700 6.700l1.900 1.800 3.600-3.700" fill="none" stroke="#d4f0e0" stroke-width="1.300"/></svg></svg>
<svg style="left:414px;top:842px;" width="16" height="16" viewBox="0 0 16 16"><svg x="0.3" y="0.3" width="13.8" height="13.8" viewBox="0 0 13 13"><circle cx="6.500" cy="6.500" r="6.500" fill="#06a55b"/><path d="M3.700 6.700l1.900 1.800 3.600-3.700" fill="none" stroke="#d4f0e0" stroke-width="1.300"/></svg></svg>
<svg style="left:501px;top:842px;" width="15" height="16" viewBox="0 0 15 16"><svg x="0.2" y="0.6" width="13.8" height="13.8" viewBox="0 0 13 13"><circle cx="6.500" cy="6.500" r="5.600" fill="#e4e4e4" stroke="#06a55b" stroke-width="1.800"/></svg></svg>
<span style="left:1016.20px;top:829.00px;font-size:13.3px;line-height:17px;color:#f0f0f0;font-weight:700;letter-spacing:-0.322px;">Cancel</span>
<svg style="left:1084px;top:819px;" width="88" height="38" viewBox="0 0 88 38"><rect x="1.650" y="1.900" width="83.700" height="34" rx="4" fill="none" stroke="#dcdcdc" stroke-width="1.400"/></svg>
<span style="left:1101.50px;top:829.00px;font-size:13.3px;line-height:17px;color:#f4f4f4;font-weight:700;letter-spacing:-0.596px;">Previous</span>
<div style="left:1181px;top:820px;width:75px;height:35px;background:#025cc9;border-radius:4px;"></div>
<span style="left:1197.40px;top:829.00px;font-size:13.3px;line-height:17px;color:#fff;font-weight:700;letter-spacing:-0.269px;">Deploy</span>
<span style="left:632.30px;top:391.00px;font-size:13.8px;line-height:18px;color:#fff;font-weight:700;letter-spacing:-0.730px;">Parameters</span>
<svg style="left:1006px;top:391px;" width="17" height="17" viewBox="0 0 17 17"><svg x="0.5" y="0.5" width="15" height="15" viewBox="0 0 24 24"><path d="M18,15v3H6v-3H4v3c0,1.1,0.9,2,2,2h12c1.1,0,2-0.9,2-2v-3H18z M17,11l-1.41-1.41L13,12.17V4h-2v8.170L8.41,9.59L7,11l5,5 L17,11z" fill="#eee" stroke="#eee" stroke-width="0.7"/></svg></svg>
<span style="left:1029.00px;top:393.00px;font-size:10.8px;line-height:14px;color:#f2f2f2;font-weight:700;letter-spacing:0.033px;">Download .csv</span>
<svg style="left:1152px;top:391px;" width="17" height="17" viewBox="0 0 17 17"><svg x="0.5" y="0.5" width="15" height="15" viewBox="0 0 24 24"><path d="M19.35 10.04C18.67 6.59 15.64 4 12 4 9.11 4 6.6 5.64 5.35 8.04 2.34 8.36 0 10.91 0 14c0 3.31 2.69 6 6 6h13c2.76 0 5-2.24 5-5 0-2.64-2.05-4.78-4.65-4.96zM14 13v4h-4v-4H7l5-5 5 5h-3z" fill="#eee"/></svg></svg>
<span style="left:1175.00px;top:393.00px;font-size:10.8px;line-height:14px;color:#f2f2f2;font-weight:700;letter-spacing:0.039px;">Upload .csv</span>
<div style="left:632px;top:428px;width:616px;height:40px;background:#2c2c2c;"></div>
<svg style="left:646px;top:439px;" width="19" height="18" viewBox="0 0 19 18"><svg x="0.75" y="0.05" width="16.3" height="16.3" viewBox="0 0 24 24"><path d="M12 2C6.48 2 2 6.48 2 12s4.48 10 10 10 10-4.48 10-10S17.52 2 12 2zm1 15h-2v-6h2v6zm0-8h-2V7h2v2z" fill="#ededed"/></svg></svg>
<span style="left:670.80px;top:442.00px;font-size:10.6px;line-height:14px;color:#e6e6e6;letter-spacing:0.328px;">This table is pre-filed with the default values for each parameter.</span>
<div style="left:632px;top:468px;width:616px;height:162px;background:#212121;"></div>
<div style="left:762px;top:468px;width:1px;height:162px;background:#3a3a3a;"></div>
<div style="left:908px;top:468px;width:1px;height:162px;background:#3a3a3a;"></div>
<div style="left:1054px;top:468px;width:1px;height:162px;background:#3a3a3a;"></div>
<div style="left:632px;top:521px;width:616px;height:1px;background:#3a3a3a;"></div>
<div style="left:632px;top:575px;width:616px;height:1px;background:#3a3a3a;"></div>
<span style="left:647.00px;top:489.00px;font-size:10.6px;line-height:14px;color:#f0f0f0;font-weight:700;letter-spacing:0.285px;">Asset</span>
<span style="left:778.00px;top:481.00px;font-size:10.6px;line-height:14px;color:#f2f2f2;font-weight:700;letter-spacing:0.241px;">faulty_gauge</span>
<span style="left:778.00px;top:498.00px;font-size:10.6px;line-height:14px;color:#6e6e6e;letter-spacing:0.262px;">Default value is: False</span>
<span style="left:924.00px;top:481.00px;font-size:10.6px;line-height:14px;color:#f2f2f2;font-weight:700;letter-spacing:0.113px;">kelvin_control_mode</span>
<span style="left:924.00px;top:498.00px;font-size:10.6px;line-height:14px;color:#6e6e6e;letter-spacing:0.370px;">Default value is: Open</span>
<span style="left:1070.00px;top:481.00px;font-size:10.6px;line-height:14px;color:#f2f2f2;font-weight:700;letter-spacing:0.207px;">lock_mode</span>
<span style="left:1070.00px;top:498.00px;font-size:10.6px;line-height:14px;color:#6e6e6e;letter-spacing:0.262px;">Default value is: False</span>
<span style="left:647.00px;top:540.00px;font-size:13px;line-height:17px;color:#bdbdbd;letter-spacing:0.180px;">Beam Pump #03</span>
<span style="left:781.00px;top:540.00px;font-size:13px;line-height:17px;color:#f4f4f4;letter-spacing:-0.199px;">False</span>
<svg style="left:873px;top:538px;" width="21" height="22" viewBox="0 0 21 22"><svg x="0.0" y="0.7" width="20" height="20" viewBox="0 0 24 24"><path d="M7 10l5 5 5-5z" fill="#f0f0f0"/></svg></svg>
<span style="left:927.00px;top:540.00px;font-size:13px;line-height:17px;color:#636363;letter-spacing:0.396px;">Open</span>
<svg style="left:1019px;top:538px;" width="21" height="22" viewBox="0 0 21 22"><svg x="0.0" y="0.7" width="20" height="20" viewBox="0 0 24 24"><path d="M7 10l5 5 5-5z" fill="#e8e8e8"/></svg></svg>
<span style="left:1073.00px;top:540.00px;font-size:13px;line-height:17px;color:#636363;letter-spacing:-0.199px;">False</span>
<svg style="left:1212px;top:538px;" width="22" height="22" viewBox="0 0 22 22"><svg x="0.5" y="0.7" width="20" height="20" viewBox="0 0 24 24"><path d="M7 10l5 5 5-5z" fill="#e8e8e8"/></svg></svg>
<span style="left:647.00px;top:594.00px;font-size:13px;line-height:17px;color:#bdbdbd;letter-spacing:-0.070px;">Beam Pump #01</span>
<span style="left:781.00px;top:594.00px;font-size:13px;line-height:17px;color:#f4f4f4;letter-spacing:-0.199px;">False</span>
<svg style="left:873px;top:592px;" width="21" height="22" viewBox="0 0 21 22"><svg x="0.0" y="0.7" width="20" height="20" viewBox="0 0 24 24"><path d="M7 10l5 5 5-5z" fill="#f0f0f0"/></svg></svg>
<span style="left:927.00px;top:594.00px;font-size:13px;line-height:17px;color:#636363;letter-spacing:0.396px;">Open</span>
<svg style="left:1019px;top:592px;" width="21" height="22" viewBox="0 0 21 22"><svg x="0.0" y="0.7" width="20" height="20" viewBox="0 0 24 24"><path d="M7 10l5 5 5-5z" fill="#e8e8e8"/></svg></svg>
<span style="left:1073.00px;top:594.00px;font-size:13px;line-height:17px;color:#636363;letter-spacing:-0.199px;">False</span>
<svg style="left:1212px;top:592px;" width="22" height="22" viewBox="0 0 22 22"><svg x="0.5" y="0.7" width="20" height="20" viewBox="0 0 24 24"><path d="M7 10l5 5 5-5z" fill="#e8e8e8"/></svg></svg>
</body></html>
